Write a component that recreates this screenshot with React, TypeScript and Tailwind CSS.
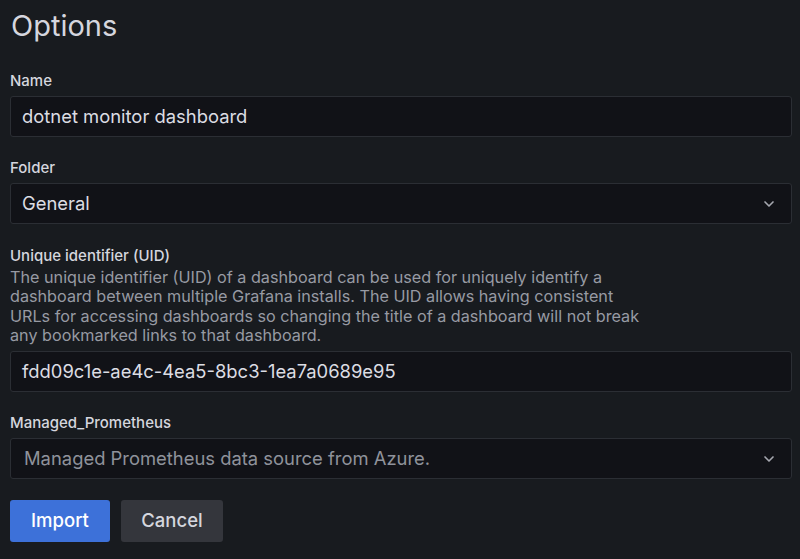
import React from 'react';
import { ChevronDown } from 'lucide-react';

const font = { fontFamily: 'Inter, "Noto Sans", sans-serif' };

const Label: React.FC<{ children: React.ReactNode; className?: string }> = ({ children, className }) => (
    <label className={`block text-[15px] leading-[19px] font-medium text-[#d5d6de] ${className ?? ''}`}>{children}</label>
);

const Input: React.FC<{ value: string }> = ({ value }) => (
    <div className="mt-[6px] h-[41px] flex items-center rounded-[3px] border border-[#2b2e34] bg-[#111217] px-[11px] text-[18.4px] text-[#dcdde3]">
        {value}
    </div>
);

const Select: React.FC<{ value: string; placeholder?: boolean }> = ({ value, placeholder }) => (
    <div className="mt-[6px] h-[41px] flex items-center justify-between rounded-[3px] border border-[#2b2e34] bg-[#111217] pl-[11px] pr-[14px] text-[18.4px]">
        <span className={placeholder ? 'text-[#8f929b] pl-[2px]' : 'text-[#dcdde3]'}>{value}</span>
        <ChevronDown size={16} strokeWidth={2.5} className="text-[#a6a8b0]" />
    </div>
);

export default function App() {
    return (
        <div className="min-h-[559px] w-full bg-[#181b1f] pl-[10px] pr-[8px] pt-[9px]" style={font}>
            <h2 className="text-[29px] leading-[34px] font-normal text-[#d5d6de] pl-[1px]">Options</h2>

            <div className="mt-[28px]">
                <Label>Name</Label>
                <Input value="dotnet monitor dashboard" />
            </div>

            <div className="mt-[21px]">
                <Label>Folder</Label>
                <Select value="General" />
            </div>

            <div className="mt-[22px]">
                <Label>Unique identifier (UID)</Label>
                <p className="mt-[3px] max-w-[640px] text-[16.2px] leading-[19.3px] text-[#979aa3]">
                    The unique identifier (UID) of a dashboard can be used for uniquely identify a dashboard between multiple Grafana installs. The UID allows having consistent URLs for accessing dashboards so changing the title of a dashboard will not break any bookmarked links to that dashboard.
                </p>
                <Input value="fdd09c1e-ae4c-4ea5-8bc3-1ea7a0689e95" />
            </div>

            <div className="mt-[21px]">
                <Label>Managed_Prometheus</Label>
                <Select value="Managed Prometheus data source from Azure." placeholder />
            </div>

            <div className="mt-[21px] flex gap-[11px]">
                <button className="h-[42px] w-[100px] rounded-[3px] bg-[#3d71d9] text-[18.5px] font-medium text-white">Import</button>
                <button className="h-[42px] w-[102px] rounded-[3px] bg-[#34363c] text-[18.5px] font-medium text-[#d5d6de]">Cancel</button>
            </div>
        </div>
    );
}
